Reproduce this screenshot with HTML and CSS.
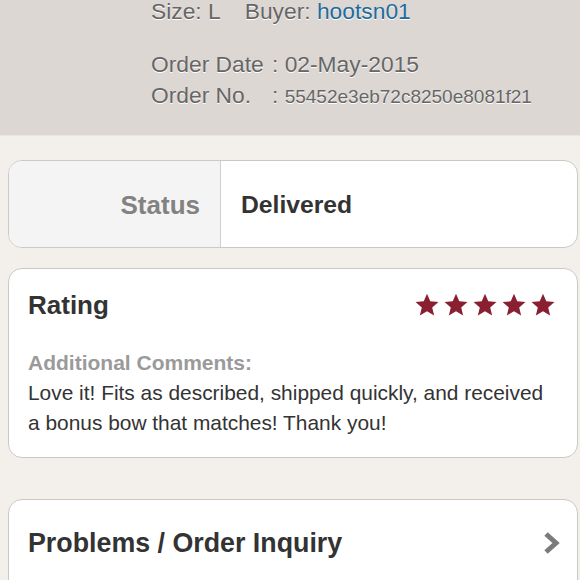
FILE: index.html
```html
<!DOCTYPE html>
<html>
<head>
<meta charset="utf-8">
<link rel="stylesheet" href="styles.css">
</head>
<body>
<div class="header">
  <div class="row first"><span>Size: L</span><span class="buyer">Buyer: <a class="link">hootsn01</a></span></div>
  <div class="meta">
    <div class="row"><span class="label">Order Date</span><span>: 02-May-2015</span></div>
    <div class="row"><span class="label">Order No.</span><span>: <span class="num">55452e3eb72c8250e8081f21</span></span></div>
  </div>
</div>
<div class="content">
  <div class="card status">
    <div class="status-label">Status</div>
    <div class="status-value">Delivered</div>
  </div>
  <div class="card rating">
    <div class="rating-head">
      <div class="title">Rating</div>
      <div class="stars">
        <svg viewBox="0 0 24 24"><path d="M12 1.5l3 7.1 7.6.6-5.8 5 1.8 7.5L12 17.7l-6.6 4 1.8-7.5-5.8-5 7.6-.6z"/></svg>
        <svg viewBox="0 0 24 24"><path d="M12 1.5l3 7.1 7.6.6-5.8 5 1.8 7.5L12 17.7l-6.6 4 1.8-7.5-5.8-5 7.6-.6z"/></svg>
        <svg viewBox="0 0 24 24"><path d="M12 1.5l3 7.1 7.6.6-5.8 5 1.8 7.5L12 17.7l-6.6 4 1.8-7.5-5.8-5 7.6-.6z"/></svg>
        <svg viewBox="0 0 24 24"><path d="M12 1.5l3 7.1 7.6.6-5.8 5 1.8 7.5L12 17.7l-6.6 4 1.8-7.5-5.8-5 7.6-.6z"/></svg>
        <svg viewBox="0 0 24 24"><path d="M12 1.5l3 7.1 7.6.6-5.8 5 1.8 7.5L12 17.7l-6.6 4 1.8-7.5-5.8-5 7.6-.6z"/></svg>
      </div>
    </div>
    <div class="comments-label">Additional Comments:</div>
    <div class="comments">Love it! Fits as described, shipped quickly, and received a bonus bow that matches! Thank you!</div>
  </div>
  <div class="card inquiry">
    <div class="title big">Problems / Order Inquiry</div>
    <svg class="chev" viewBox="0 0 20 24"><path d="M5 3l10 9-10 9"/></svg>
  </div>
</div>
</body>
</html>
```
FILE: styles.css
```css
html, body {
  margin: 0;
  padding: 0;
  height: 580px;
  overflow: hidden;
}
body {
  font-family: "Liberation Sans", Arial, sans-serif;
  background: #f3f0eb;
}
.header {
  background: #ddd7d3;
  height: 136px;
  border-bottom: 1px solid #e9e5e1;
  padding-left: 151px;
  box-sizing: border-box;
  color: #666;
  font-size: 22.8px;
  text-shadow: 0 1px 0 #fff;
  overflow: hidden;
}
.row {
  display: flex;
  align-items: baseline;
  height: 31px;
  line-height: 31px;
}
.first {
  margin-top: -4px;
}
.buyer {
  margin-left: 24px;
}
.link {
  color: #1e6b9b;
}
.meta {
  margin-top: 22px;
}
.label {
  width: 121px;
}
.num {
  font-size: 19px;
}
.content {
  padding: 24px 2px 0 8px;
  display: flex;
  flex-direction: column;
}
.card {
  background: #fff;
  border: 1.5px solid #cbc9c6;
  border-radius: 14px;
  box-sizing: border-box;
}
.status {
  height: 88px;
  display: flex;
  overflow: hidden;
}
.status-label {
  width: 212px;
  background: #f4f4f4;
  border-right: 1.5px solid #cfcfcf;
  display: flex;
  align-items: center;
  justify-content: flex-end;
  padding-right: 20px;
  padding-top: 2px;
  box-sizing: border-box;
  font-weight: bold;
  font-size: 26px;
  color: #828282;
}
.status-value {
  display: flex;
  align-items: center;
  padding-left: 20px;
  padding-top: 2px;
  font-weight: bold;
  font-size: 24.7px;
  color: #333;
}
.rating {
  margin-top: 20px;
  height: 190px;
  padding: 20px 20px 0 19px;
}
.rating-head {
  display: flex;
  justify-content: space-between;
  align-items: center;
  height: 32px;
}
.title {
  font-weight: bold;
  font-size: 26px;
  color: #333;
}
.title.big {
  font-size: 26.8px;
}
.stars {
  display: flex;
  gap: 3px;
  margin-right: 1px;
}
.stars svg {
  width: 26px;
  height: 26px;
  fill: #8a1f31;
}
.comments-label {
  margin-top: 27px;
  font-weight: bold;
  font-size: 21px;
  color: #9a9a9a;
  line-height: 30px;
}
.comments {
  font-size: 20.9px;
  color: #333;
  line-height: 30px;
}
.inquiry {
  margin-top: 41px;
  height: 100px;
  padding: 0 16px 0 19px;
  display: flex;
  align-items: flex-start;
  justify-content: space-between;
}
.inquiry .title {
  margin-top: 26px;
  line-height: 34px;
}
.chev {
  width: 20px;
  height: 24px;
  margin-top: 31px;
  fill: none;
  stroke: #7b7b7b;
  stroke-width: 5;
  stroke-linejoin: miter;
}
```
